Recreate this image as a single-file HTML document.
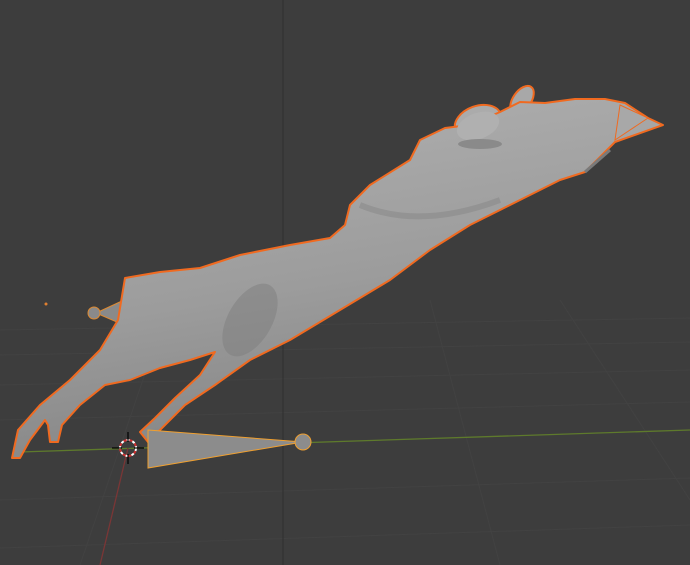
<!DOCTYPE html>
<html><head><meta charset="utf-8"><style>
html,body{margin:0;padding:0;background:#3d3d3d;width:690px;height:565px;overflow:hidden}
svg{display:block}
</style></head><body>
<svg width="690" height="565" viewBox="0 0 690 565" xmlns="http://www.w3.org/2000/svg">
<defs>
<linearGradient id="g" x1="0" y1="0" x2="0.3" y2="1">
<stop offset="0" stop-color="#b2b2b2"/><stop offset="0.6" stop-color="#9c9c9c"/><stop offset="1" stop-color="#858585"/>
</linearGradient>
</defs>
<rect width="690" height="565" fill="#3d3d3d"/>
<g stroke="#424242" stroke-width="1" fill="none">
<line x1="0" y1="330" x2="690" y2="318"/>
<line x1="0" y1="355" x2="690" y2="342"/>
<line x1="0" y1="385" x2="690" y2="370"/>
<line x1="0" y1="420" x2="690" y2="402"/>
<line x1="0" y1="500" x2="690" y2="478"/>
<line x1="0" y1="548" x2="690" y2="525"/>
<line x1="170" y1="300" x2="80" y2="565"/>
<line x1="430" y1="300" x2="500" y2="565"/>
<line x1="560" y1="300" x2="690" y2="500"/>
</g>
<line x1="283" y1="0" x2="283" y2="565" stroke="#2f2f2f" stroke-width="1"/>
<line x1="20" y1="452" x2="690" y2="430" stroke="#5e7a2c" stroke-width="1.3"/>
<line x1="128" y1="448" x2="100" y2="565" stroke="#7a3636" stroke-width="1.3"/>
<circle cx="46" cy="304" r="1.5" fill="#e08030"/>
<polygon points="96,313 124,300 126,326" fill="#8a8a8a" stroke="#e08a30" stroke-width="1"/>
<circle cx="94" cy="313" r="6" fill="#8a8a8a" stroke="#e08a30" stroke-width="1"/>
<ellipse cx="522" cy="100" rx="9" ry="16" transform="rotate(35 522 100)" fill="#a8a8a8" stroke="#f06a20" stroke-width="2"/>
<ellipse cx="478" cy="122" rx="24" ry="16" transform="rotate(-20 478 122)" fill="#ababab" stroke="#f06a20" stroke-width="2"/>
<path d="M12,458 L18,430 L40,405 L70,380 L100,350 L118,320 L125,278 L160,272 L200,268 L240,255 L290,245 L330,238 L345,225 L350,205 L370,185 L410,160 L420,140 L445,128 L470,125 L500,112 L520,102 L545,103 L575,99 L605,99 L625,103 L648,118 L663,125 L615,142 L585,172 L560,180 L520,200 L470,225 L430,250 L390,280 L340,310 L290,340 L250,360 L215,385 L185,405 L160,430 L148,442 L140,432 L155,418 L175,398 L200,375 L215,352 L190,360 L160,368 L130,380 L105,385 L80,405 L62,425 L58,442 L50,442 L48,425 L45,420 L30,440 L20,458 Z" fill="url(#g)" stroke="#f06a20" stroke-width="2" stroke-linejoin="round"/>
<ellipse cx="478" cy="126" rx="22" ry="13" transform="rotate(-20 478 126)" fill="#b0b0b0"/>
<ellipse cx="480" cy="144" rx="22" ry="5" fill="#8a8a8a"/>
<path d="M360,205 Q420,230 500,200" stroke="#8a8a8a" stroke-width="6" fill="none" opacity="0.6"/>
<path d="M620,105 L648,118 L615,140 Z" fill="#a8a8a8" stroke="#f06a20" stroke-width="1"/>
<path d="M585,172 L610,150" stroke="#7a7a7a" stroke-width="3"/>
<ellipse cx="250" cy="320" rx="22" ry="40" transform="rotate(30 250 320)" fill="#7e7e7e" opacity="0.5"/>
<polygon points="148,430 303,442 148,468" fill="#8c8c8c" stroke="#f0a030" stroke-width="1"/>
<circle cx="303" cy="442" r="8" fill="#8c8c8c" stroke="#f0a030" stroke-width="1"/>
<circle cx="128" cy="448" r="8" fill="none" stroke="#fff" stroke-width="2" stroke-dasharray="3 3"/>
<circle cx="128" cy="448" r="8" fill="none" stroke="#d03030" stroke-width="2" stroke-dasharray="3 3" stroke-dashoffset="3"/>
<g stroke="#000" stroke-width="1.2">
<line x1="112" y1="448" x2="122" y2="448"/><line x1="134" y1="448" x2="144" y2="448"/>
<line x1="128" y1="432" x2="128" y2="442"/><line x1="128" y1="454" x2="128" y2="464"/>
</g>
</svg>
</body></html>
